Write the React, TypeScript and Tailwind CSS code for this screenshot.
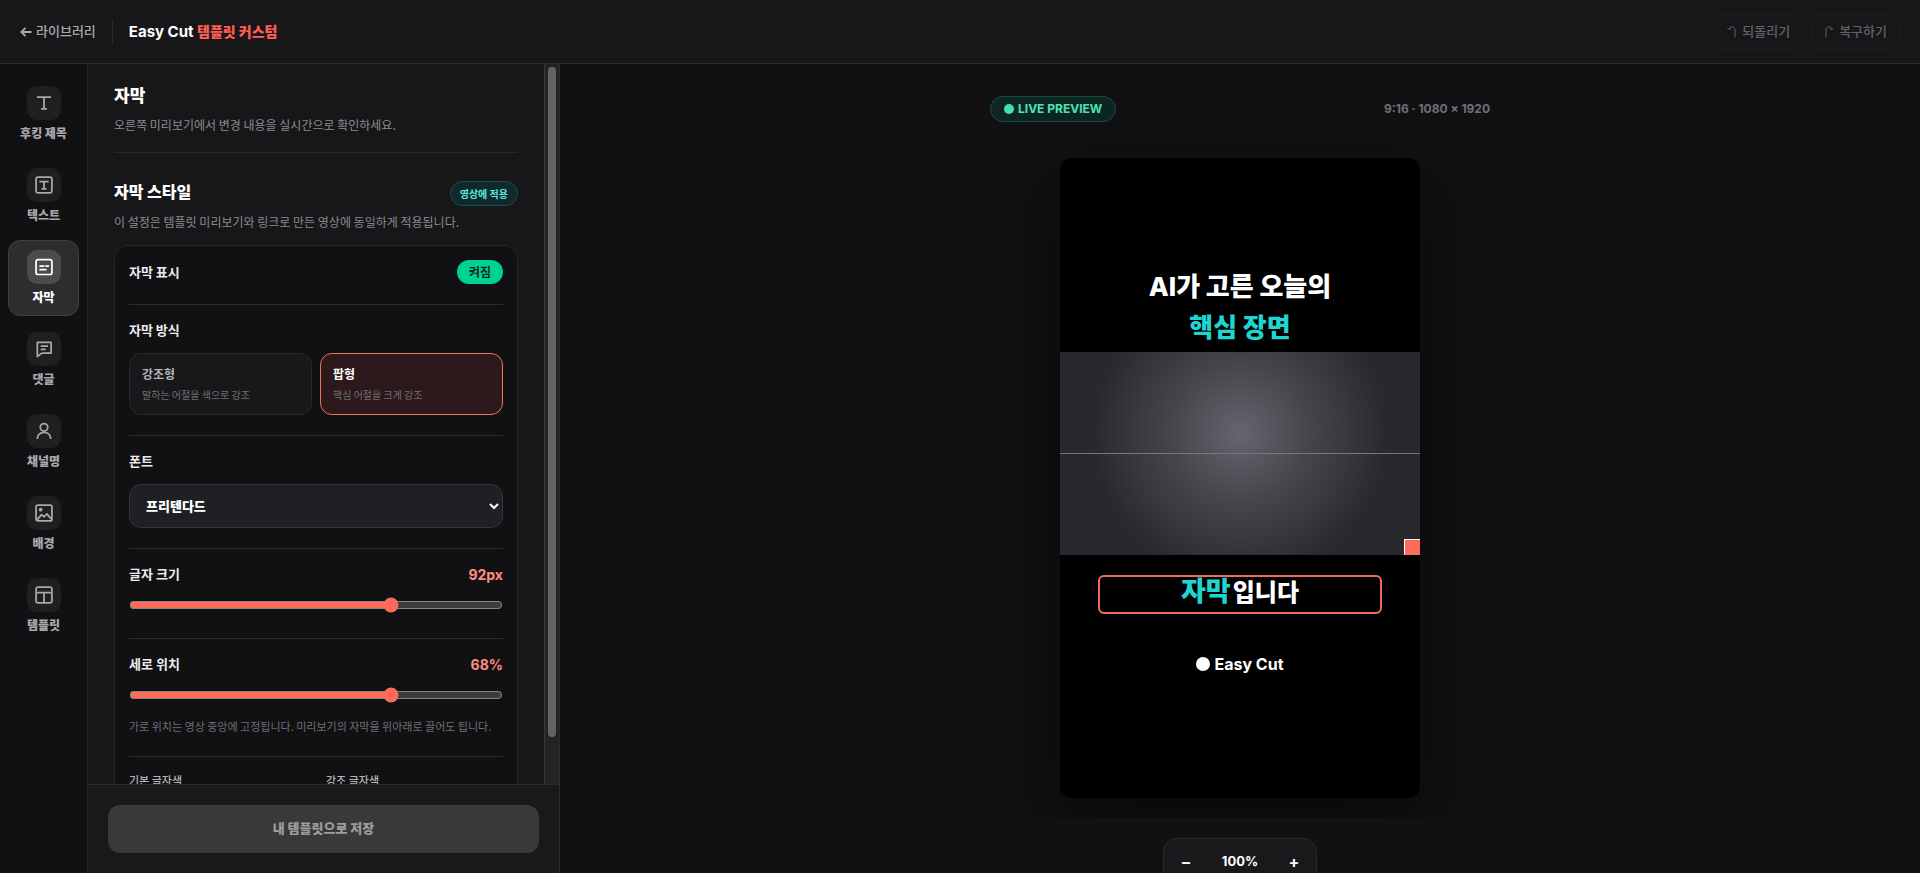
import { useState, type ReactNode } from "react";

type NavItem = { label: string; icon: ReactNode };

const Icon = ({ children }: { children: ReactNode }) => (
  <svg viewBox="0 0 24 24" className="size-5" fill="none" stroke="currentColor" strokeWidth="2.1" strokeLinejoin="round" aria-hidden="true">
    {children}
  </svg>
);

const navItems: NavItem[] = [
  { label: "후킹 제목", icon: <Icon><path d="M3.5 5h17M12 5v14M8.500 19h7" /></Icon> },
  { label: "텍스트", icon: <Icon><rect x="2.500" y="2.500" width="19" height="19" rx="2.500" /><path d="M6.500 8h11M12 8v8.500M9 16.500h6" /></Icon> },
  { label: "자막", icon: <Icon><rect x="2.500" y="3" width="19" height="18" rx="2.500" /><path d="M6.500 11h6M13.500 11h4.500M6.500 15h8.500" /></Icon> },
  { label: "댓글", icon: <Icon><path d="M4 4h16.500v13H9.500L4 21z" /><path d="M8 8.500h9M8 12.500h6" /></Icon> },
  { label: "채널명", icon: <Icon><circle cx="12" cy="7.500" r="4.500" /><path d="M4 21.500c0-5 3.500-8 8-8s8 3 8 8" /></Icon> },
  { label: "배경", icon: <Icon><rect x="2.500" y="2.500" width="19" height="19" rx="2" /><circle cx="8" cy="8" r="1.200" /><path d="M4 20l5-6 3 2.500 3.500-3.500 5 6" /></Icon> },
  { label: "템플릿", icon: <Icon><rect x="2.500" y="2.500" width="19" height="19" rx="2.500" /><path d="M2.500 9h19M12 9v12.500" /></Icon> },
];

function Header() {
  return (
    <header className="flex h-16 shrink-0 items-center justify-between border-b border-[#2c2c2f] bg-[#17171a] px-5 pt-px">
      <div className="flex items-center">
        <a href="#library" className="flex items-center gap-1 text-[13px] font-medium text-[#a9a9ad]">
          <svg viewBox="0 0 12 12" className="size-3" fill="none" stroke="currentColor" strokeWidth="1.8" aria-hidden="true">
            <path d="M11.500 6H1.500M5.500 1.800L1.300 6l4.200 4.200" />
          </svg>
          라이브러리
        </a>
        <span className="mx-4 h-6 w-px bg-[#2a2a2d]" />
        <h1 className="text-[15px] font-bold text-white">
          Easy Cut <span className="text-sm font-extrabold text-[#ff5f52]">템플릿 커스텀</span>
        </h1>
      </div>
      <div className="flex gap-2">
        <button disabled className="flex h-[34px] items-center gap-[5px] rounded-lg border border-[#1d1d20] px-3 text-[13px] font-medium text-[#626266]">
          <svg viewBox="0 0 10 14" className="h-3.5 w-2.5" fill="none" stroke="currentColor" aria-hidden="true">
            <path d="M2 4.500c.500-3.500 6-4 6 .5v7.500M.500 3L2 4.500 4 3.500" />
          </svg>
          되돌리기
        </button>
        <button disabled className="flex h-[34px] items-center gap-[5px] rounded-lg border border-[#1d1d20] px-3 text-[13px] font-medium text-[#626266]">
          <svg viewBox="0 0 10 14" className="h-3.5 w-2.5" fill="none" stroke="currentColor" aria-hidden="true">
            <path d="M8 4.500c-.500-3.500-6-4-6 .5v7.500M9.500 3L8 4.500 6 3.500" />
          </svg>
          복구하기
        </button>
      </div>
    </header>
  );
}

function Sidebar() {
  const [active, setActive] = useState("자막");
  return (
    <nav className="flex w-[88px] shrink-0 flex-col gap-1.5 border-r border-[#27272a] bg-[#111114] px-2 pt-3">
      {navItems.map(({ label, icon }) => {
        const on = label === active;
        return (
          <button
            key={label}
            onClick={() => setActive(label)}
            className={`flex h-[76px] flex-col items-center gap-1.5 rounded-xl border pt-[9px] text-xs font-extrabold ${
              on ? "border-[#3f3f42] bg-[#2d2d30] text-white" : "border-transparent text-[#a9a9ad]"
            }`}
          >
            <span className={`grid size-[34px] place-items-center rounded-[10px] ${on ? "bg-[#4b4b4d]" : "bg-[#1f1f20]"}`}>{icon}</span>
            {label}
          </button>
        );
      })}
    </nav>
  );
}

function Slider({ id, label, unit, min, max, initial }: { id: string; label: string; unit: string; min: number; max: number; initial: number }) {
  const [value, setValue] = useState(initial);
  return (
    <>
      <div className="flex h-5 items-center justify-between">
        <label htmlFor={id} className="text-[13px] font-bold text-[#ececee]">{label}</label>
        <output htmlFor={id} className="text-sm font-bold text-[#ff8d7f]">{value}{unit}</output>
      </div>
      <input
        id={id}
        type="range"
        min={min}
        max={max}
        value={value}
        onChange={(e) => setValue(Number(e.target.value))}
        className="mt-3 block h-4 w-full accent-[#ff6b5a] scheme-dark"
      />
    </>
  );
}

const modes = [
  { name: "강조형", text: "말하는 어절을 색으로 강조" },
  { name: "팝형", text: "핵심 어절을 크게 강조" },
];

function CaptionPanel() {
  const [shown, setShown] = useState(true);
  const [mode, setMode] = useState("팝형");
  return (
    <section className="flex w-[472px] shrink-0 flex-col border-r border-[#2c2c2f] bg-[#17171a] font-['Noto_Sans_CJK_KR',Inter,sans-serif]">
      <div className="flex min-h-0 flex-1">
        <div className="min-w-0 flex-1 overflow-hidden px-[26px] pt-[19px]">
          <div className="border-b border-[#27272a] pb-[17px]">
            <h2 className="text-[17px] leading-6 font-extrabold text-white">자막</h2>
            <p className="mt-2 text-xs leading-5 text-[#8b8b90]">오른쪽 미리보기에서 변경 내용을 실시간으로 확인하세요.</p>
          </div>
          <div className="mt-7 flex h-6 items-start justify-between">
            <h3 className="text-base leading-5 font-extrabold text-white">자막 스타일</h3>
            <span className="flex h-[25px] items-center rounded-full border border-[#1b4f4e] bg-[#10292b] px-[9px] text-[10px] font-bold text-[#5ce8e1]">영상에 적용</span>
          </div>
          <p className="mt-[7px] text-xs leading-5 text-[#8b8b90]">이 설정은 템플릿 미리보기와 링크로 만든 영상에 동일하게 적용됩니다.</p>
          <div className="mt-[13px] divide-y divide-[#2c2c2f] rounded-[14px] border border-[#27272a] bg-[#111113] px-3.5">
            <div className="flex h-[59px] items-center justify-between pb-1.5">
              <span className="text-[13px] font-bold text-[#ececee]">자막 표시</span>
              <button
                aria-pressed={shown}
                onClick={() => setShown(!shown)}
                className="h-6 rounded-full bg-[#00d294] px-3 text-xs font-bold text-[#06291f]"
              >
                {shown ? "켜짐" : "꺼짐"}
              </button>
            </div>
            <div className="pt-[15px] pb-5">
              <h4 className="text-[13px] leading-5 font-bold text-[#ececee]">자막 방식</h4>
              <div className="mt-[13px] grid grid-cols-2 gap-2">
                {modes.map((m) => (
                  <button
                    key={m.name}
                    aria-pressed={m.name === mode}
                    onClick={() => setMode(m.name)}
                    className={`flex h-[62px] flex-col justify-center gap-1 rounded-xl border px-3 text-left ${
                      m.name === mode ? "border-[#f07263] bg-[#2d191b] text-white" : "border-[#29292c] bg-[#18181b] text-[#b4b4b8]"
                    }`}
                  >
                    <span className="text-xs leading-[18px] font-bold">{m.name}</span>
                    <span className="text-[10px] leading-4 text-[#6f6f73]">{m.text}</span>
                  </button>
                ))}
              </div>
            </div>
            <div className="pt-[15px] pb-5">
              <label htmlFor="font" className="block text-[13px] leading-5 font-bold text-[#ececee]">폰트</label>
              <select id="font" className="mt-[13px] h-11 w-full rounded-xl border border-[#33343a] bg-[#1f2024] px-3 font-[Inter,'Noto_Sans_CJK_KR',sans-serif] text-[13px] font-extrabold text-white scheme-dark">
                <option>프리텐다드</option>
              </select>
            </div>
            <div className="pt-4 pb-[25px] font-[Inter,'Noto_Sans_CJK_KR',sans-serif]">
              <Slider id="size" label="글자 크기" unit="px" min={48} max={110} initial={92} />
            </div>
            <div className="pt-4 pb-5 font-[Inter,'Noto_Sans_CJK_KR',sans-serif]">
              <Slider id="pos" label="세로 위치" unit="%" min={2} max={95} initial={68} />
              <p className="mt-[13px] font-['Noto_Sans_CJK_KR',Inter,sans-serif] text-[11px] leading-5 text-[#6f6f73]">가로 위치는 영상 중앙에 고정됩니다. 미리보기의 자막을 위아래로 끌어도 됩니다.</p>
            </div>
            <div className="grid grid-cols-2 gap-5 py-[15px] text-[11px] leading-4 font-medium text-[#b4b4b8]">
              <span>기본 글자색</span>
              <span>강조 글자색</span>
            </div>
          </div>
        </div>
        <div className="w-[15px] shrink-0 border-l border-[#39393b] bg-[#242426] px-[3px] pt-[3px]">
          <div className="h-[93.5%] rounded-full bg-[#636364]" />
        </div>
      </div>
      <div className="border-t border-[#2c2c2f] bg-[#19191b] p-5">
        <button className="h-12 w-full rounded-xl bg-[#393939] font-[Inter,'Noto_Sans_CJK_KR',sans-serif] text-[13px] font-extrabold text-[#9d9d9d]">내 템플릿으로 저장</button>
      </div>
    </section>
  );
}

function Preview() {
  const [zoom, setZoom] = useState(100);
  return (
    <main className="flex min-w-0 flex-1 flex-col items-center overflow-hidden bg-[#111114]">
      <div className="flex w-full shrink-0 flex-col items-center overflow-hidden pt-8 pb-5">
        <div className="flex w-[500px] items-center justify-between text-xs font-bold">
          <span className="flex h-[26px] items-center gap-1 rounded-full border border-[#145041] bg-[#0d2622] px-[13px] text-[#50e3b4]">
            <span className="size-2.5 rounded-full bg-[#41e3ad]" />
            LIVE PREVIEW
          </span>
          <span className="text-[#717175]">9:16 · 1080 × 1920</span>
        </div>
        <div className="mt-9 flex h-[640px] w-[360px] flex-col items-center overflow-hidden rounded-xl bg-black font-extrabold text-white shadow-[0_24px_70px_rgba(0,0,0,0.5)]">
          <p className="pt-[108px] text-center text-[26px] leading-[41px]">
            AI가 고른 오늘의
            <br />
            <span className="text-[#1fd5d2]">핵심 장면</span>
          </p>
          <div className="mt-1 flex h-[203px] w-full shrink-0 flex-col bg-[radial-gradient(circle_at_50%_40%,#65656f,#45454b_32%,#29292d_68%)]">
            <div className="flex-1 border-b border-[#77777c]" />
            <div className="flex flex-1 items-end justify-end">
              <span className="size-4 border-t border-l border-white bg-[#ff6b5a]" />
            </div>
          </div>
          <div className="mt-5 flex h-[39px] w-[284px] shrink-0 items-baseline justify-center gap-0.5 rounded-md border-2 border-[#ee6c66] text-2xl leading-[30px]">
            <span className="text-[27px] leading-[30px] text-[#1fd5d2]">자막</span>
            <span>입니다</span>
          </div>
          <div className="mt-[38px] flex items-center gap-1 text-base leading-6 font-bold">
            <span className="size-3.5 rounded-full bg-white" />
            Easy Cut
          </div>
        </div>
      </div>
      <div className="mt-5 flex h-12 shrink-0 items-center rounded-[14px] border border-[#2a2a2d] bg-[#19191c] px-1.5 text-[13px] font-bold text-white">
        <button aria-label="축소" onClick={() => setZoom(zoom - 10)} className="h-9 w-8 text-base">–</button>
        <output className="w-[76px] text-center">{zoom}%</output>
        <button aria-label="확대" onClick={() => setZoom(zoom + 10)} className="h-9 w-8 text-base">+</button>
      </div>
    </main>
  );
}

export default function App() {
  return (
    <div className="flex h-screen flex-col overflow-hidden bg-[#111114] font-[Inter,'Noto_Sans_CJK_KR',sans-serif]">
      <Header />
      <div className="flex min-h-0 flex-1">
        <Sidebar />
        <CaptionPanel />
        <Preview />
      </div>
    </div>
  );
}
